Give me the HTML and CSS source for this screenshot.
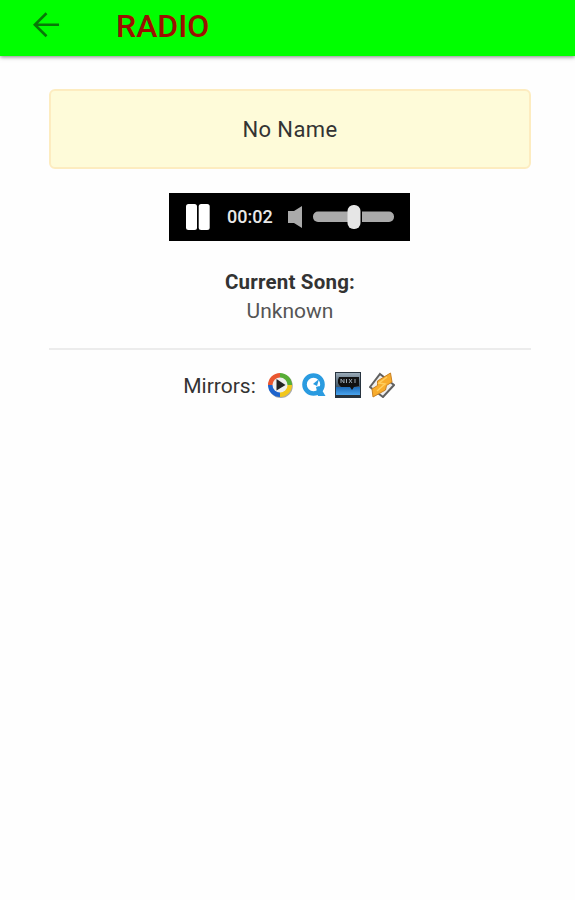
FILE: index.html
```html
<!DOCTYPE html>
<html lang="en">
<head>
    <meta charset="utf-8">
    <meta name="viewport" content="width=device-width, initial-scale=1">
    <title>Radio</title>
    <link rel="stylesheet" href="styles.css">
</head>
<body>
    <header class="toolbar">
        <a class="back" href="#" aria-label="Back">
            <svg width="26" height="26" viewBox="0 0 26 26"><path d="M26 12.8H2M13.5 1.3L1.8 12.8L13.5 24.3" fill="none" stroke="#087808" stroke-width="2.6"/></svg>
        </a>
        <h1>RADIO</h1>
    </header>
    <main>
        <div class="station">No Name</div>
        <div class="player">
            <svg class="pause" width="24" height="26" viewBox="0 0 24 26"><rect width="11" height="26" rx="2.5" fill="#fff"/><rect x="12.7" width="11" height="26" rx="2.5" fill="#fff"/></svg>
            <span class="time">00:02</span>
            <svg class="speaker" width="14" height="22" viewBox="0 0 14 22"><path d="M0 5h6l8-5v22l-8-5H0z" fill="#aaa"/></svg>
            <svg class="volume" width="82" height="24" viewBox="0 0 82 24"><rect y="6.5" width="81" height="10.5" rx="5" fill="#aaa"/><rect x="46" y="6" width="3" height="12" fill="#000"/><rect x="34.500" width="13" height="24" rx="6" fill="#e6e6e6"/></svg>
        </div>
        <div class="song">
            <b>Current Song:</b>
            <span>Unknown</span>
        </div>
        <hr>
        <div class="mirrors">
            <span>Mirrors:</span>
            <svg width="26" height="26" viewBox="0 0 26 26">
                <circle cx="13.8" cy="14" r="12" fill="#aaa"/>
                <path d="M13 13V1A12 12 0 0 0 1 13z" fill="#e9562f"/>
                <path d="M13 13H25A12 12 0 0 0 13 1z" fill="#57ad35"/>
                <path d="M13 13V25A12 12 0 0 0 25 13z" fill="#f2c71c"/>
                <path d="M13 13H1A12 12 0 0 0 13 25z" fill="#1d63cc"/>
                <circle cx="13" cy="13" r="7.5" fill="#eee"/>
                <path d="M9.5 7L18.5 13L9.500 18.500z" fill="#222"/>
            </svg>
            <svg width="26" height="26" viewBox="0 0 26 26">
                <circle cx="12.5" cy="12.5" r="9" fill="#fff" stroke="#2a9be0" stroke-width="4.6"/>
                <path d="M15 15l3.500-1L24.500 24H17z" fill="#2a9be0"/>
                <path d="M12 12l6-5-2 7z" fill="#2a9be0"/>
            </svg>
            <svg width="26" height="26" viewBox="0 0 26 26">
                <defs>
                    <linearGradient id="sky" x2="0" y2="1"><stop stop-color="#9aabb8"/><stop offset="1" stop-color="#405464"/></linearGradient>
                    <linearGradient id="sea" x2="0" y2="1"><stop stop-color="#1d6bb8"/><stop offset="1" stop-color="#49a4ee"/></linearGradient>
                </defs>
                <rect width="26" height="26" fill="#27333e"/>
                <rect x="1" y="1" width="24" height="14" fill="url(#sky)"/>
                <rect x="1" y="15" width="24" height="8" fill="url(#sea)"/>
                <path d="M4 5h20v9l-5 1-2 3-2-3H6q-5-4-2-10z" fill="#111"/>
                <path d="M6 11V7l3 4V7M11.500 7v4M14 7l3 4M17 7l-3 4M20 7v4" fill="none" stroke="#9aa6b0"/>
            </svg>
            <svg width="26" height="26" viewBox="0 0 26 26">
                <path d="M11 2L25 13L14 25L1 15z" fill="#eee" stroke="#606060" stroke-width="2"/>
                <path d="M21.500 1L23 10L17.500 13.500L16.500 18L4 25L3 17L8.500 13.500L8.500 9z" fill="#f8ac2c" stroke="#c98224"/>
                <path d="M18 5L10 11L16 12L8 19" fill="none" stroke="#ffcf60" stroke-width="1.500"/>
            </svg>
        </div>
    </main>
</body>
</html>
```
FILE: styles.css
```css
* {
    box-sizing: border-box;
}

body {
    margin: 0;
    font-family: Roboto, sans-serif;
    font-size: 21px;
    background: #fefefe;
    color: #333;
}

.toolbar {
    display: flex;
    align-items: center;
    height: 56px;
    padding: 0 33px 7px;
    background: #00ff00;
    box-shadow: 0 1px 4px rgba(0, 0, 0, 0.5);
}

.back {
    display: flex;
}

h1 {
    margin: 3px 0 0 57px;
    font-size: 32px;
    font-weight: 500;
    color: #9b1000;
}

main {
    padding: 33px 44px 0 49px;
}

.station {
    display: flex;
    align-items: center;
    justify-content: center;
    height: 80px;
    padding-top: 1px;
    border: 2px solid #fdecc0;
    border-radius: 6px;
    background: #fefbd9;
    font-size: 22px;
    letter-spacing: 0.4px;
}

.player {
    display: flex;
    align-items: center;
    width: 241px;
    height: 48px;
    margin: 24px 0 0 120px;
    padding-left: 17px;
    background: #000;
}

.time {
    width: 45px;
    margin: 0 16px 0 17px;
    font-size: 18px;
    font-weight: 500;
    line-height: 24px;
    padding-bottom: 1px;
    color: #e8e8e8;
}

.volume {
    margin-left: 11px;
}

.song {
    display: flex;
    flex-direction: column;
    align-items: center;
    margin-top: 27px;
    line-height: 29px;
}

.song b {
    font-size: 20.5px;
    letter-spacing: 0.2px;
}

.song span {
    color: #555;
}

hr {
    height: 2px;
    margin: 22px 0 21px;
    border: 0;
    background: #ececec;
}

.mirrors {
    display: flex;
    align-items: center;
    justify-content: center;
    gap: 8px;
    margin-right: 2px;
}

.mirrors span {
    margin: 3px 3px 0 0;
}
```
